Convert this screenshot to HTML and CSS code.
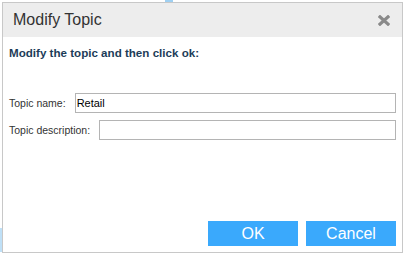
FILE: index.html
```html
<!DOCTYPE html>
<html lang="en">
<head>
    <meta charset="UTF-8">
    <meta name="viewport" content="width=device-width, initial-scale=1.0">
    <title>Modify Topic</title>
    <link rel="stylesheet" href="styles.css">
</head>
<body>
    <div class="dialog">
        <div class="dialog_header">
            <span class="dialog_title">Modify Topic</span>
            <button class="close_button" title="Close">
                <svg width="12" height="11" viewBox="0 0 12 11">
                    <path d="M0.8 0.8 L11.2 10.2 M11.2 0.8 L0.8 10.2" stroke="#8a8a8a" stroke-width="3.2" stroke-linecap="butt"/>
                </svg>
            </button>
        </div>
        <div class="dialog_body">
            <p class="intro">Modify the topic and then click ok:</p>
            <div class="form_row">
                <label for="topic_name">Topic name:</label>
                <input id="topic_name" class="text_input" type="text" value="Retail">
            </div>
            <div class="form_row">
                <label for="topic_desc">Topic description:</label>
                <input id="topic_desc" class="text_input" type="text">
            </div>
            <div class="button_row">
                <button class="action_button">OK</button>
                <button class="action_button">Cancel</button>
            </div>
        </div>
    </div>
</body>
</html>
```

FILE: styles.css
```css
body {
    margin: 0;
    padding: 2px;
    background:
        linear-gradient(#bfe0f7, #bfe0f7) 0 228px / 2px 24px no-repeat,
        linear-gradient(#9fd0f2, #9fd0f2) 165px 0 / 8px 2px no-repeat,
        #ffffff;
    font-family: "Liberation Sans", Arial, sans-serif;
}
.dialog {
    width: 401px;
    height: 251px;
    box-sizing: border-box;
    border: 1px solid #c8c8c8;
    background-color: #ffffff;
    display: flex;
    flex-direction: column;
}
.dialog_header {
    height: 34px;
    flex-shrink: 0;
    background-color: #ededed;
    display: flex;
    align-items: center;
    justify-content: space-between;
    padding: 0 12px 0 10px;
}
.dialog_title {
    font-size: 16px;
    color: #333333;
}
.close_button {
    border: none;
    background: none;
    padding: 0;
    margin-top: 1px;
    display: flex;
    cursor: pointer;
}
.dialog_body {
    flex: 1;
    display: flex;
    flex-direction: column;
    padding: 9px 6px 6px 5px;
}
.intro {
    margin: 0 0 0 1px;
    font-size: 11.6px;
    line-height: 14px;
    font-weight: bold;
    color: #1d3c58;
}
.form_row {
    display: flex;
    align-items: center;
    gap: 9px;
    margin-top: 7px;
}
.intro + .form_row {
    margin-top: 33px;
}
.form_row label {
    font-size: 10.5px;
    color: #333333;
    padding-left: 1px;
}
.text_input {
    flex: 1;
    height: 20px;
    box-sizing: border-box;
    border: 1px solid #b4b4b4;
    padding: 0 1px;
    font-family: "Liberation Sans", Arial, sans-serif;
    font-size: 11px;
    color: #000000;
    outline: none;
}
.button_row {
    margin-top: auto;
    display: flex;
    justify-content: flex-end;
    gap: 8px;
}
.action_button {
    width: 90px;
    height: 25px;
    border: none;
    background-color: #3aa9fc;
    color: #ffffff;
    font-family: "Liberation Sans", Arial, sans-serif;
    font-size: 16px;
    cursor: pointer;
    padding: 0;
}
.action_button:hover {
    background-color: #2b95e6;
}
```
